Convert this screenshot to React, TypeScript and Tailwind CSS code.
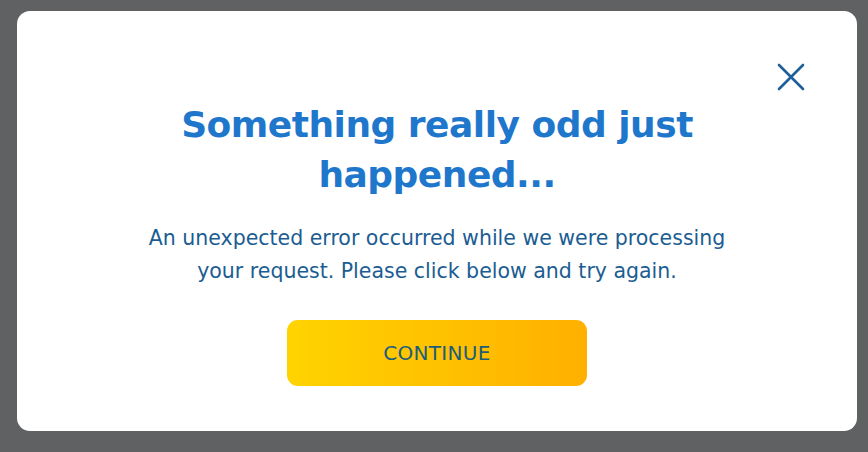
import React from "react";

export default function App() {
  return (
    <div className="w-[868px] h-[452px] bg-[#5f6163] pt-[11px] pl-[17px]">
      <div className="relative w-[840px] h-[420px] bg-white rounded-[13px] flex flex-col items-center pt-[89px] font-['DejaVu_Sans',sans-serif]">
        <button className="absolute right-[51px] top-[51px] w-[30px] h-[30px] flex items-center justify-center">
          <svg width="28" height="28" viewBox="0 0 28 28" fill="none">
            <path d="M2 2L26 26M26 2L2 26" stroke="#1c5f9a" strokeWidth="2.6" strokeLinecap="round" />
          </svg>
        </button>
        <h1 className="text-[36px] leading-[50px] font-bold text-[#1f77cc] text-center w-[540px] tracking-[-0.5px]">
          Something really odd just happened...
        </h1>
        <p className="mt-[22px] text-[20.5px] leading-[33px] text-[#1b5d92] text-center w-[600px]">
          An unexpected error occurred while we were processing your request. Please click below and try again.
        </p>
        <button className="mt-[32px] w-[300px] h-[66px] rounded-[11px] bg-gradient-to-r from-[#ffd300] to-[#ffb000] text-[20px] text-[#1b5d7a] tracking-[0.3px]">
          CONTINUE
        </button>
      </div>
    </div>
  );
}
